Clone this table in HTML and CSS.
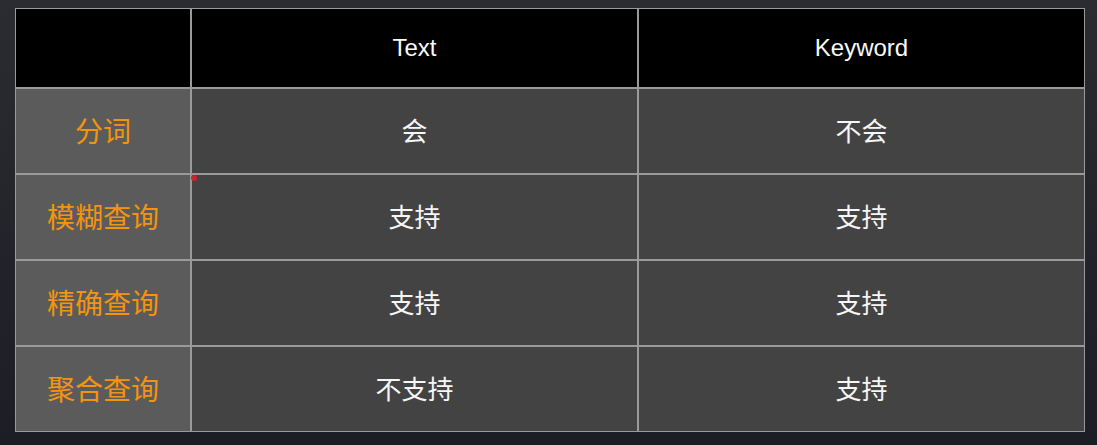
FILE: index.html
```html
<!DOCTYPE html>
<html lang="zh">
<head>
<meta charset="utf-8">
<title>Text vs Keyword</title>
<link rel="stylesheet" href="styles.css">
</head>
<body>
<div class="stage">
  <div class="table">
    <div class="cell head corner"></div>
    <div class="cell head">Text</div>
    <div class="cell head">Keyword</div>

    <div class="cell label">分词</div>
    <div class="cell data">会</div>
    <div class="cell data">不会</div>

    <div class="cell label">模糊查询</div>
    <div class="cell data">支持</div>
    <div class="cell data">支持</div>

    <div class="cell label">精确查询</div>
    <div class="cell data">支持</div>
    <div class="cell data">支持</div>

    <div class="cell label">聚合查询</div>
    <div class="cell data">不支持</div>
    <div class="cell data">支持</div>
  </div>
  <span class="cursor-dot"></span>
</div>
</body>
</html>
```

FILE: styles.css
```css
html, body {
  margin: 0;
  height: 100%;
}
body {
  background: linear-gradient(180deg, #2b2c31 0%, #24252b 50%, #1c1d25 100%);
  font-family: "Liberation Sans", Arial, "Noto Sans CJK SC", sans-serif;
}
.stage {
  position: relative;
  padding: 8px 12px 13px 15px;
}
.table {
  display: grid;
  grid-template-columns: 174px 445px 445px;
  grid-template-rows: 78px 84px 84px 84px 84px;
  gap: 2px;
  padding: 1px;
  background: #9a9a9a;
  width: 1070px;
  box-sizing: border-box;
}
.cell {
  display: flex;
  align-items: center;
  justify-content: center;
  line-height: 1;
}
.head {
  background: #000;
  color: #fafafa;
  font-size: 24px;
}
.label {
  background: #5b5b5b;
  color: #f3940f;
  font-size: 28px;
  font-family: "Noto Sans CJK SC", sans-serif;
  padding-bottom: 2px;
}
.data {
  background: #434343;
  color: #f6f6f6;
  font-size: 26px;
  font-family: "Noto Sans CJK SC", sans-serif;
  padding-bottom: 2px;
}
.cursor-dot {
  position: absolute;
  left: 191px;
  top: 175px;
  width: 6px;
  height: 6px;
  border-radius: 50%;
  background: #c8242a;
}
```
